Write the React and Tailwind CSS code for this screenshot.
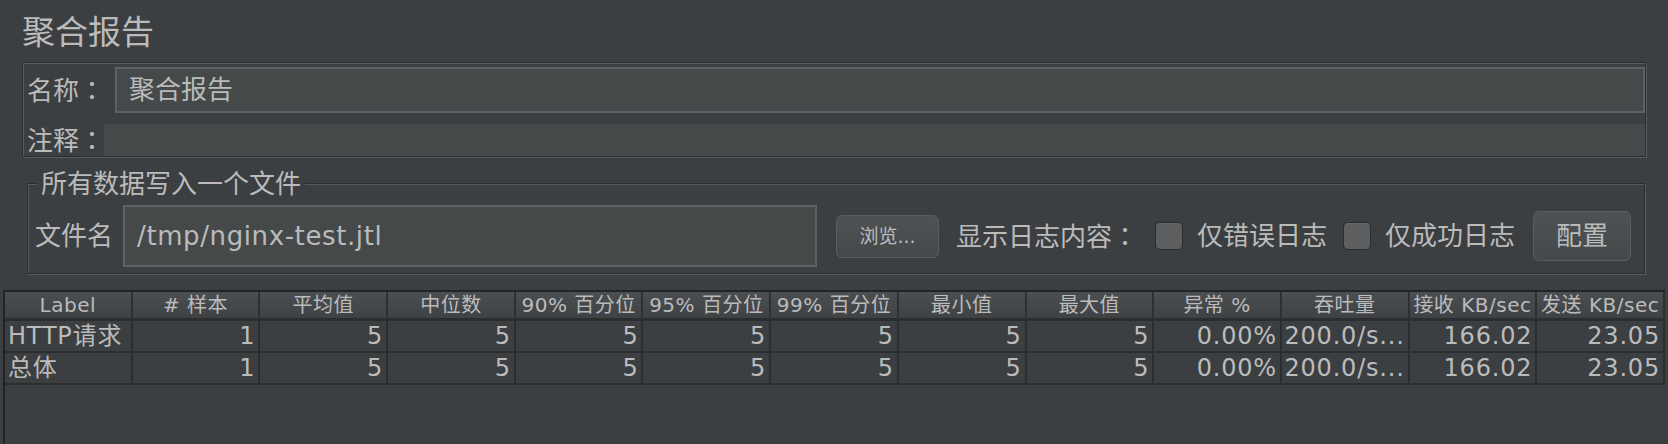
import React from "react";

const font = "font-['DejaVu_Sans','Noto_Sans_CJK_SC',sans-serif]";

const columns = [
  "Label",
  "# 样本",
  "平均值",
  "中位数",
  "90% 百分位",
  "95% 百分位",
  "99% 百分位",
  "最小值",
  "最大值",
  "异常 %",
  "吞吐量",
  "接收 KB/sec",
  "发送 KB/sec",
];

const rows = [
  ["HTTP请求", "1", "5", "5", "5", "5", "5", "5", "5", "0.00%", "200.0/s...", "166.02", "23.05"],
  ["总体", "1", "5", "5", "5", "5", "5", "5", "5", "0.00%", "200.0/s...", "166.02", "23.05"],
];

// full-width colon, centred in its cell like the mac rendering
function Colon() {
  return <span className="font-['Noto_Sans_CJK_JP',sans-serif]">：</span>;
}

function Checkbox() {
  return (
    <span className="block h-[28px] w-[28px] shrink-0 rounded-[5px] border border-[#2a2c2e] bg-[#5c5e60] shadow-[inset_0_1px_0_#686a6c]" />
  );
}

export default function App() {
  return (
    <div className={`flex h-[444px] w-[1668px] flex-col overflow-hidden bg-[#3c3f41] text-[#bbbbbb] ${font}`}>
      {/* title */}
      <div className="flex h-[62px] items-center pl-[22px] pt-[2px] text-[33px] leading-none">
        聚合报告
      </div>

      {/* name / comment panel */}
      <div className="mx-[22px] flex flex-col border border-[#2b2d2f] pl-[4px] pt-[4px] shadow-[1px_1px_0_#585b5d,inset_1px_1px_0_#585b5d]">
        <div className="flex h-[46px] items-center">
          <span className="w-[88px] shrink-0 whitespace-nowrap text-[26px] leading-none">
            名称<Colon />
          </span>
          <div className="flex h-[46px] flex-1 items-center border-2 border-[#5e6163] bg-[#45494a] pl-[12px] text-[26px] leading-none">
            聚合报告
          </div>
        </div>
        <div className="mt-[11px] flex h-[32px] items-center">
          <span className="w-[77px] shrink-0 whitespace-nowrap text-[26px] leading-none">
            注释<Colon />
          </span>
          <div className="h-[32px] flex-1 bg-[#45494a]" />
        </div>
      </div>

      {/* write all data to a file */}
      <div className="relative mx-[27px] mr-[23px] mt-[26px] border border-[#2b2d2f] pb-[6px] pl-[7px] pt-[21px] shadow-[1px_1px_0_#585b5d,inset_1px_1px_0_#585b5d]">
        <span className="absolute left-[9px] top-[-15px] whitespace-nowrap bg-[#3c3f41] px-[4px] text-[26px] leading-[30px]">
          所有数据写入一个文件
        </span>
        <div className="flex h-[62px] items-center whitespace-nowrap text-[26px] leading-none">
          <span className="shrink-0">文件名</span>
          <div className="ml-[10px] flex h-[62px] w-[694px] shrink-0 items-center border-2 border-[#5e6163] bg-[#45494a] pl-[12px] tracking-[0.6px]">
            /tmp/nginx-test.jtl
          </div>
          <button
            type="button"
            className="ml-[19px] flex h-[43px] w-[103px] shrink-0 items-center justify-center rounded-[6px] border border-[#5a5d5f] bg-gradient-to-b from-[#4e5254] to-[#45494b] text-[19px] text-[#bbbbbb]"
          >
            浏览...
          </button>
          <span className="ml-[17px] shrink-0">
            显示日志内容<Colon />
          </span>
          <span className="ml-[17px]">
            <Checkbox />
          </span>
          <span className="ml-[14px] shrink-0">仅错误日志</span>
          <span className="ml-[16px]">
            <Checkbox />
          </span>
          <span className="ml-[14px] shrink-0">仅成功日志</span>
          <button
            type="button"
            className="ml-[18px] flex h-[50px] w-[98px] shrink-0 items-center justify-center rounded-[6px] border border-[#5a5d5f] bg-gradient-to-b from-[#4e5254] to-[#45494b] text-[26px] text-[#bbbbbb]"
          >
            配置
          </button>
        </div>
      </div>

      {/* aggregate table */}
      <div className="mx-[3px] mt-[16px] flex-1 border-l-2 border-t-2 border-[#222426]">
        <div className="grid h-[29px] grid-cols-13 border-b-[3px] border-[#2b2d2f] bg-gradient-to-b from-[#4c4f52] to-[#3f4245]">
          {columns.map((c) => (
            <div
              key={c}
              className="flex items-center justify-center overflow-hidden whitespace-nowrap border-r-2 border-[#2e3032] text-[20px] leading-none tracking-[0.5px]"
            >
              {c}
            </div>
          ))}
        </div>
        {rows.map((r, i) => (
          <div key={i} className="grid h-[32px] grid-cols-13 border-b-2 border-[#2b2d2f]">
            {r.map((v, j) => (
              <div
                key={j}
                className={
                  "flex items-center overflow-hidden whitespace-nowrap border-r-2 border-[#2b2d2f] text-[24px] leading-none tracking-[0.8px] " +
                  (j === 0 ? "justify-start pl-[3px]" : "justify-end pr-[3px]")
                }
              >
                {v}
              </div>
            ))}
          </div>
        ))}
      </div>
    </div>
  );
}
